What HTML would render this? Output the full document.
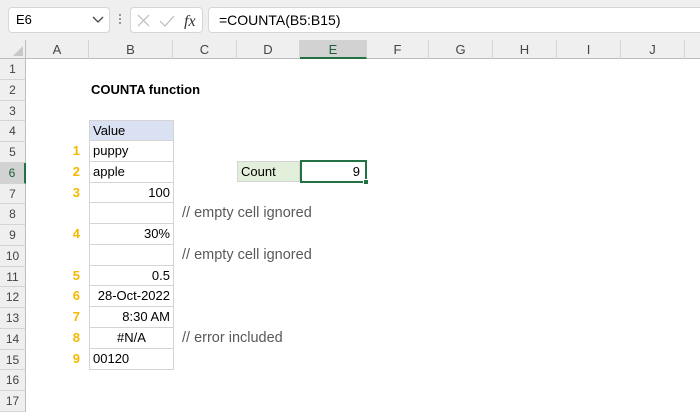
<!DOCTYPE html>
<html><head><style>
*{margin:0;padding:0;box-sizing:border-box}
body{width:700px;height:400px;overflow:hidden;background:#fff;font-family:"Liberation Sans",Calibri,sans-serif;font-size:13px;color:#000;position:relative}
.a{position:absolute}
.tb{left:0;top:0;width:700px;height:40px;background:#efefef}
.box{background:#fff;border:1px solid #d6d6d6;border-radius:4px}
.ch{top:40px;height:19px;background:#efefef;border-bottom:1px solid #bdbdbd;border-right:1px solid #d4d4d4;text-align:center;line-height:19px;color:#444;font-size:13px}
.rh{left:0;width:26px;background:#efefef;border-bottom:1px solid #d4d4d4;border-right:1px solid #bdbdbd;text-align:center;color:#444;font-size:12px}
.c{left:89px;width:85px;border:1px solid #d4d4d4;border-top:none;padding:0 3px}
.n{left:40px;width:40px;text-align:right;color:#f5b800;font-weight:bold}
.cm{left:182px;color:#595959;font-size:14.5px}
</style></head><body>
<div class="a tb"></div>
<div class="a box" style="left:8px;top:7px;width:102px;height:26px;line-height:24px;padding-left:7px">E6</div>
<svg class="a" style="left:92px;top:16px" width="12" height="8"><path d="M1 1 L6 6 L11 1" fill="none" stroke="#444" stroke-width="1.3"/></svg>
<div class="a" style="left:119px;top:14px;width:2px;height:2px;background:#999;box-shadow:0 4px #999,0 8px #999"></div>
<div class="a box" style="left:130px;top:7px;width:73px;height:26px"></div>
<svg class="a" style="left:136px;top:13px" width="70" height="16"><path d="M2 2 L13 13 M13 2 L2 13" stroke="#bbb" stroke-width="1.2"/><path d="M24 8 L29 13 L38 3" fill="none" stroke="#bbb" stroke-width="1.2"/><text x="48" y="13" font-family="Liberation Serif" font-style="italic" font-size="16" fill="#333">fx</text></svg>
<div class="a box" style="left:208px;top:7px;width:500px;height:26px;line-height:24px;padding-left:10px;font-size:14px">=COUNTA(B5:B15)</div>

<div class="a" style="left:0;top:40px;width:26px;height:19px;background:#efefef;border-right:1px solid #bdbdbd;border-bottom:1px solid #bdbdbd"></div>
<svg class="a" style="left:12px;top:45px" width="12" height="12"><path d="M11 1 L11 11 L1 11 Z" fill="#c8c8c8"/></svg>
<div class="a ch" style="left:26px;width:63px">A</div>
<div class="a ch" style="left:89px;width:84px">B</div>
<div class="a ch" style="left:173px;width:64px">C</div>
<div class="a ch" style="left:237px;width:63px">D</div>
<div class="a ch" style="left:300px;width:67px;background:#d2d2d2;border-bottom:2px solid #217346;color:#1e5e3a">E</div>
<div class="a ch" style="left:367px;width:62px">F</div>
<div class="a ch" style="left:429px;width:64px">G</div>
<div class="a ch" style="left:493px;width:64px">H</div>
<div class="a ch" style="left:557px;width:64px">I</div>
<div class="a ch" style="left:621px;width:64px">J</div>
<div class="a ch" style="left:685px;width:30px"></div>

<div class="a rh" style="top:59px;height:20.75px;line-height:20px">1</div>
<div class="a rh" style="top:79.75px;height:20.75px;line-height:20px">2</div>
<div class="a rh" style="top:100.5px;height:20.75px;line-height:20px">3</div>
<div class="a rh" style="top:121.25px;height:20.75px;line-height:20px">4</div>
<div class="a rh" style="top:142px;height:20.75px;line-height:20px">5</div>
<div class="a rh" style="top:162.75px;height:20.75px;line-height:20px;background:#d2d2d2;border-right:2px solid #217346;color:#1e5e3a">6</div>
<div class="a rh" style="top:183.5px;height:20.75px;line-height:20px">7</div>
<div class="a rh" style="top:204.25px;height:20.75px;line-height:20px">8</div>
<div class="a rh" style="top:225px;height:20.75px;line-height:20px">9</div>
<div class="a rh" style="top:245.75px;height:20.75px;line-height:20px">10</div>
<div class="a rh" style="top:266.5px;height:20.75px;line-height:20px">11</div>
<div class="a rh" style="top:287.25px;height:20.75px;line-height:20px">12</div>
<div class="a rh" style="top:308px;height:20.75px;line-height:20px">13</div>
<div class="a rh" style="top:328.75px;height:20.75px;line-height:20px">14</div>
<div class="a rh" style="top:349.5px;height:20.75px;line-height:20px">15</div>
<div class="a rh" style="top:370.25px;height:20.75px;line-height:20px">16</div>
<div class="a rh" style="top:391px;height:20.75px;line-height:20px">17</div>

<div class="a" style="left:91px;top:80px;line-height:20px;font-weight:bold">COUNTA function</div>

<div class="a c" style="top:120px;height:21px;line-height:20px;background:#d9e1f2;border-top:1px solid #d4d4d4">Value</div>
<div class="a c" style="top:141px;height:20.75px;line-height:20px">puppy</div>
<div class="a c" style="top:161.75px;height:20.75px;line-height:20px">apple</div>
<div class="a c" style="top:182.5px;height:20.75px;line-height:20px;text-align:right">100</div>
<div class="a c" style="top:203.25px;height:20.75px"></div>
<div class="a c" style="top:224px;height:20.75px;line-height:20px;text-align:right">30%</div>
<div class="a c" style="top:244.75px;height:20.75px"></div>
<div class="a c" style="top:265.5px;height:20.75px;line-height:20px;text-align:right">0.5</div>
<div class="a c" style="top:286.25px;height:20.75px;line-height:20px;text-align:right">28-Oct-2022</div>
<div class="a c" style="top:307px;height:20.75px;line-height:20px;text-align:right">8:30 AM</div>
<div class="a c" style="top:327.75px;height:20.75px;line-height:20px;text-align:center">#N/A</div>
<div class="a c" style="top:348.5px;height:21.75px;line-height:20px">00120</div>

<div class="a n" style="top:141px;line-height:20px">1</div>
<div class="a n" style="top:161.75px;line-height:20px">2</div>
<div class="a n" style="top:182.5px;line-height:20px">3</div>
<div class="a n" style="top:224px;line-height:20px">4</div>
<div class="a n" style="top:265.5px;line-height:20px">5</div>
<div class="a n" style="top:286.25px;line-height:20px">6</div>
<div class="a n" style="top:307px;line-height:20px">7</div>
<div class="a n" style="top:327.75px;line-height:20px">8</div>
<div class="a n" style="top:348.5px;line-height:20px">9</div>

<div class="a cm" style="top:203.25px;line-height:20px">// empty cell ignored</div>
<div class="a cm" style="top:244.75px;line-height:20px">// empty cell ignored</div>
<div class="a cm" style="top:327.75px;line-height:20px">// error included</div>

<div class="a" style="left:237px;top:161px;width:63px;height:21px;background:#e2efda;border:1px solid #d4d4d4;padding-left:3px;line-height:20px">Count</div>
<div class="a" style="left:300px;top:160px;width:67px;height:23px;border:2px solid #217346;text-align:right;padding-right:5px;line-height:19px">9</div>
<div class="a" style="left:363px;top:179px;width:6px;height:6px;background:#217346;border:1px solid #fff"></div>
</body></html>
